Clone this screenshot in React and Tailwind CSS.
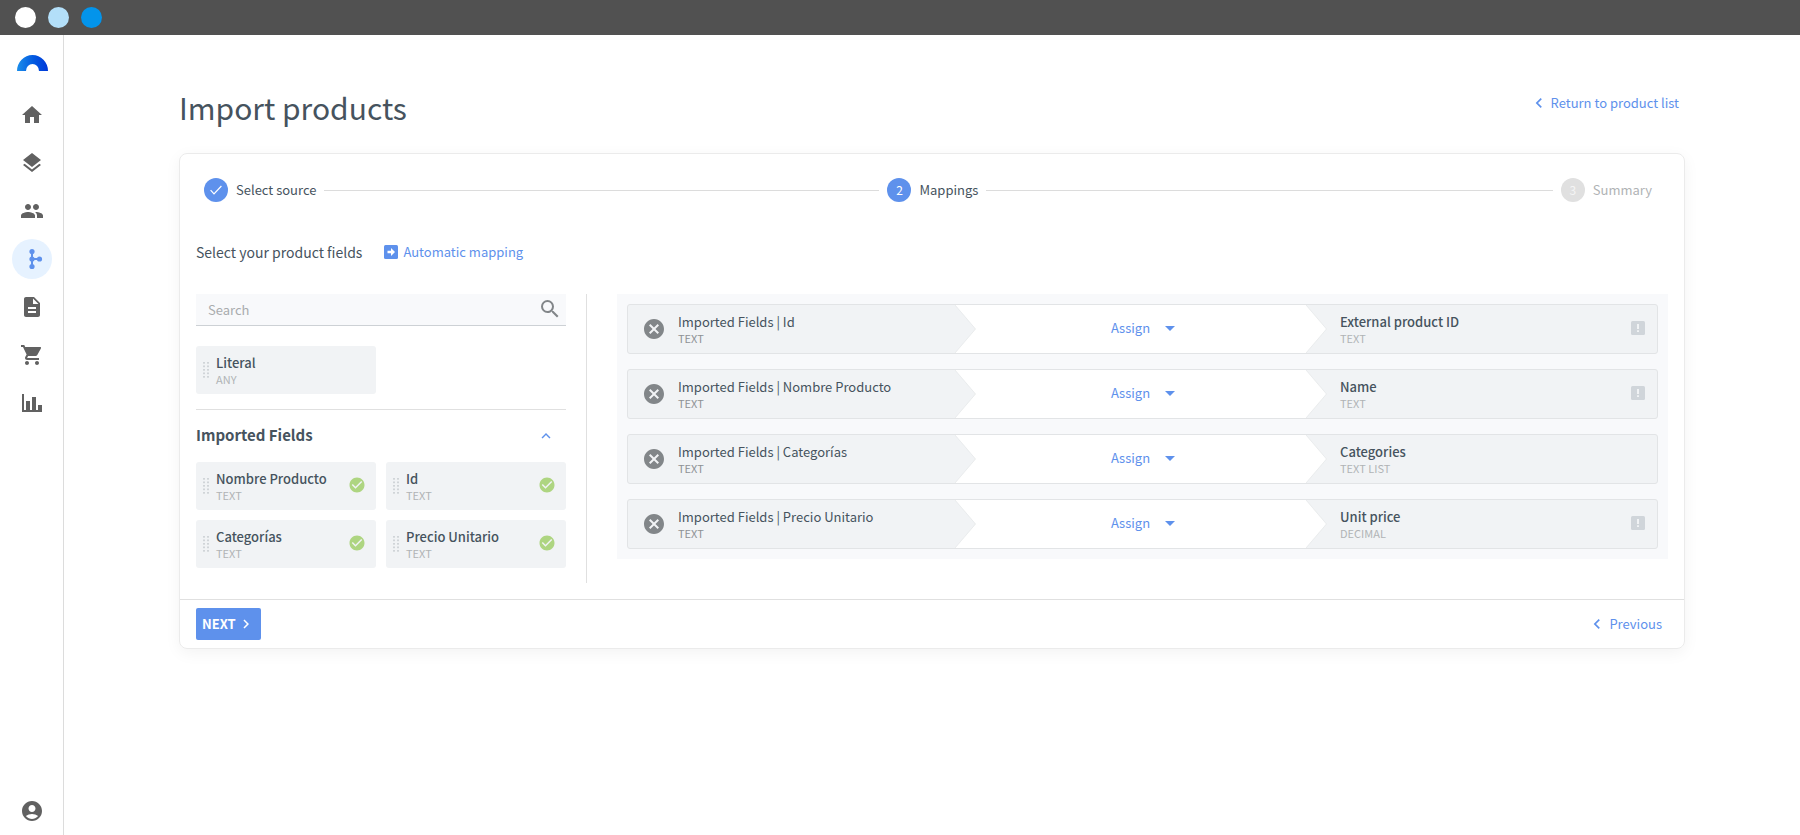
import React from "react";
import {
  MdHome,
  MdLayers,
  MdPeople,
  MdDescription,
  MdShoppingCart,
  MdAccountCircle,
  MdSearch,
  MdCheckCircle,
  MdCancel,
  MdChevronLeft,
  MdChevronRight,
  MdExpandLess,
  MdArrowDropDown,
} from "react-icons/md";

const importedFields = [
  { name: "Nombre Producto", type: "TEXT" },
  { name: "Id", type: "TEXT" },
  { name: "Categorías", type: "TEXT" },
  { name: "Precio Unitario", type: "TEXT" },
];

const mappings = [
  { source: "Id", target: "External product ID", type: "TEXT", required: true },
  { source: "Nombre Producto", target: "Name", type: "TEXT", required: true },
  { source: "Categorías", target: "Categories", type: "TEXT LIST", required: false },
  { source: "Precio Unitario", target: "Unit price", type: "DECIMAL", required: true },
];

function Logo() {
  return (
    <svg width="32" height="16" viewBox="0 0 32 16" aria-hidden="true">
      <defs>
        <linearGradient id="arc" x1="0" x2="1" y1="0" y2="0">
          <stop offset="0" stopColor="#1b8eea" />
          <stop offset="0.55" stopColor="#0258e0" />
          <stop offset="1" stopColor="#0038d8" />
        </linearGradient>
      </defs>
      <path d="M1 16a15.500 16 0 0 1 31 0h-9a6.500 7 0 0 0-13 0z" fill="url(#arc)" />
    </svg>
  );
}

function BranchIcon() {
  return (
    <svg width="24" height="24" viewBox="0 0 24 24" fill="currentColor" aria-hidden="true">
      <circle cx="12" cy="4.500" r="2.600" />
      <circle cx="12" cy="12" r="2.600" />
      <circle cx="12" cy="19.500" r="2.600" />
      <circle cx="19.500" cy="12" r="2.600" />
      <path d="M11 4.500h2v15h-2z M12 11h7.500v2H12z" />
    </svg>
  );
}

function ChartIcon() {
  return (
    <svg width="24" height="24" viewBox="0 0 24 24" fill="currentColor" aria-hidden="true">
      <path d="M2 3h2v16h2V10h4v9h2V6h4v13h2v-5h4v7H2z" />
    </svg>
  );
}

function ArrowBox() {
  return (
    <svg width="14" height="14" viewBox="0 0 14 14" aria-hidden="true">
      <rect width="14" height="14" rx="1.500" fill="currentColor" />
      <path d="M3.500 5.800h3.500V3L11 7 7 11V8.200H3.500z" fill="#fff" />
    </svg>
  );
}

function WarnBox() {
  return (
    <svg className="mb-0.5 text-[#d0d5da]" width="14" height="14" viewBox="0 0 14 14" role="img" aria-label="Required">
      <rect width="14" height="14" rx="1.500" fill="currentColor" />
      <path d="M6 3h2v5H6z M6 9.200h2v1.800H6z" fill="#f1f3f5" />
    </svg>
  );
}

function DragHandle() {
  return (
    <svg width="6" height="16" viewBox="0 0 6 16" fill="#d0d4d8" aria-hidden="true">
      {[0, 3.5, 7, 10.5, 14].map((y) => (
        <g key={y}>
          <rect x="0" y={y} width="2" height="1.700" />
          <rect x="4" y={y} width="2" height="1.700" />
        </g>
      ))}
    </svg>
  );
}

function NavItem({ label, active, children }) {
  return (
    <a
      href="#"
      aria-label={label}
      className={
        "flex size-10 items-center justify-center rounded-full " +
        (active ? "bg-[#e6f2ff] text-[#5e91ec]" : "text-[#616161]")
      }
    >
      {children}
    </a>
  );
}

function FieldChip({ name, type, mapped }) {
  return (
    <div className="flex h-12 items-center rounded-[3px] bg-[#f1f3f5] pr-2.5 pl-[7px]">
      <DragHandle />
      <div className="ml-[7px] flex-1 pt-0.5 whitespace-nowrap">
        <div className="text-[13px] leading-4 font-medium">{name}</div>
        <div className="text-[11px] leading-4 text-[#b0b3b5]">{type}</div>
      </div>
      {mapped && <MdCheckCircle size={18} className="mb-0.5 text-[#aed581]" aria-label="Mapped" />}
    </div>
  );
}

function Arrow({ fill }) {
  return (
    <svg
      className="absolute top-0 left-0 h-full w-[21px]"
      viewBox="0 0 21 48"
      preserveAspectRatio="none"
      aria-hidden="true"
    >
      <path d="M0 0L20.500 24 0 48z" fill={fill} />
      <path d="M0 0L20.500 24 0 48" fill="none" stroke="#e6e8ea" strokeWidth="0.800" />
    </svg>
  );
}

function MappingRow({ source, target, type, required }) {
  return (
    <li className="grid h-[50px] grid-cols-[327fr_351fr_351fr] overflow-hidden rounded-[3px] border border-[#e2e4e6] bg-[#f1f3f5]">
      <div className="flex items-center pl-3.5">
        <button type="button" aria-label={"Remove " + source} className="text-[#828689]">
          <MdCancel size={24} />
        </button>
        <div className="ml-3 pt-0.5">
          <div className="text-[13px] leading-4">Imported Fields | {source}</div>
          <div className="text-[11px] leading-4 text-[#8e9295]">TEXT</div>
        </div>
      </div>
      <div className="relative flex items-center justify-center bg-white pb-0.5 pl-8">
        <Arrow fill="#f1f3f5" />
        <button type="button" className="flex items-center gap-2 text-[13px] leading-4 text-[#5e91ec]">
          Assign
          <MdArrowDropDown size={24} />
        </button>
      </div>
      <div className="relative flex items-center justify-between pr-3 pl-[34px]">
        <Arrow fill="#ffffff" />
        <div className="pt-0.5">
          <div className="text-[13px] leading-4 font-medium">{target}</div>
          <div className="text-[11px] leading-4 text-[#b0b3b5]">{type}</div>
        </div>
        {required && <WarnBox />}
      </div>
    </li>
  );
}

function Step({ badge, label, disabled }) {
  return (
    <li className={"flex items-center gap-2 " + (disabled ? "text-[#b0b3b5]" : "")}>
      <span
        className={
          "flex size-6 items-center justify-center rounded-full text-[12px] leading-4 " +
          (disabled ? "bg-[#e0e0e0] text-[#f5f5f5]" : "bg-[#5e91ec] text-white")
        }
      >
        {badge}
      </span>
      <span className="text-[13px] leading-4">{label}</span>
    </li>
  );
}

export default function App() {
  return (
    <div className="flex min-h-screen flex-col bg-white font-['Noto_Sans_CJK_SC',sans-serif] text-[#46535e]">
      <div className="flex h-[35px] items-center gap-3 bg-[#515151] pb-px pl-[15px]">
        <span className="size-[21px] rounded-full bg-white" />
        <span className="size-[21px] rounded-full bg-[#b3dff9]" />
        <span className="size-[21px] rounded-full bg-[#0394eb]" />
      </div>

      <div className="flex flex-1">
        <nav className="flex w-16 flex-col items-center gap-2 border-r border-[#dcdcdc] pt-5 pb-1">
          <a href="#" aria-label="Start" className="mb-4">
            <Logo />
          </a>
          <NavItem label="Home"><MdHome size={24} /></NavItem>
          <NavItem label="Catalogue"><MdLayers size={24} /></NavItem>
          <NavItem label="Customers"><MdPeople size={24} /></NavItem>
          <NavItem label="Integrations" active><BranchIcon /></NavItem>
          <NavItem label="Documents"><MdDescription size={24} /></NavItem>
          <NavItem label="Orders"><MdShoppingCart size={24} /></NavItem>
          <NavItem label="Reports"><ChartIcon /></NavItem>
          <div className="mt-auto">
            <NavItem label="Account"><MdAccountCircle size={24} /></NavItem>
          </div>
        </nav>

        <main className="min-w-0 flex-1 px-[115px] pt-[50px]">
          <header className="flex items-start justify-between">
            <h1 className="text-[30px] leading-[44px]">Import products</h1>
            <a href="#" className="mt-2 mr-1.5 flex items-center gap-0.5 text-[13px] leading-4 text-[#5e91ec]">
              <MdChevronLeft size={20} />
              Return to product list
            </a>
          </header>

          <section className="mt-6 rounded-lg border border-[#ebebeb] shadow-[0_4px_16px_rgba(0,0,0,0.05)]">
            <ol className="flex items-center gap-2 px-6 pt-6 pr-8">
              <Step
                badge={
                  <svg width="12" height="10" viewBox="0 0 12 10" fill="none" role="img" aria-label="Done">
                    <path d="M0.600 5.200L4 8.800 11.400 1" stroke="#fff" strokeWidth="1.200" />
                  </svg>
                }
                label="Select source"
              />
              <li aria-hidden="true" className="h-px flex-[49] bg-[#dcdcdc]" />
              <Step badge="2" label="Mappings" />
              <li aria-hidden="true" className="h-px flex-[50] bg-[#dcdcdc]" />
              <Step badge="3" label="Summary" disabled />
            </ol>

            <div className="mt-10 flex items-center gap-[22px] px-4">
              <h2 className="text-[14px] leading-5">Select your product fields</h2>
              <button type="button" className="flex items-center gap-[5px] text-[13px] leading-4 text-[#5e91ec]">
                <ArrowBox />
                Automatic mapping
              </button>
            </div>

            <div className="flex items-start px-4 pt-8 pb-4">
              <aside className="w-[391px] shrink-0 border-r border-[#e0e0e0] pr-5 pb-[15px]">
                <label className="flex h-8 items-center border-b border-[#cdd1d5] bg-[#f8f9fb] pr-1 pl-3">
                  <input
                    type="text"
                    placeholder="Search"
                    aria-label="Search"
                    className="h-6 min-w-0 flex-1 bg-transparent text-[13px] leading-6 outline-none placeholder:text-[#a9acae]"
                  />
                  <MdSearch size={24} className="mb-0.5 text-[#828689]" />
                </label>
                <div className="mt-5 grid grid-cols-2 gap-2.5 border-b border-[#e0e0e0] pb-[15px]">
                  <FieldChip name="Literal" type="ANY" />
                </div>
                <div className="mt-[15px] flex items-end justify-between pr-[11px]">
                  <h3 className="text-[15px] leading-5 font-bold">Imported Fields</h3>
                  <button type="button" aria-label="Collapse" className="text-[#5e91ec]">
                    <MdExpandLess size={18} />
                  </button>
                </div>
                <div className="mt-[17px] grid grid-cols-2 gap-2.5">
                  {importedFields.map((f) => (
                    <FieldChip key={f.name} name={f.name} type={f.type} mapped />
                  ))}
                </div>
              </aside>

              <ul className="ml-[30px] flex min-w-0 flex-1 flex-col gap-[15px] bg-[#f8f9fb] p-2.5">
                {mappings.map((m) => (
                  <MappingRow key={m.target} {...m} />
                ))}
              </ul>
            </div>

            <footer className="flex items-center justify-between border-t border-[#e0e0e0] px-4 py-2">
              <button
                type="button"
                className="flex h-8 items-center gap-px rounded-xs bg-[#5e91ec] px-1.5 text-[13px] leading-4 font-bold text-white"
              >
                NEXT
                <MdChevronRight size={18} />
              </button>
              <button type="button" className="mr-1.5 flex items-center gap-0.5 text-[13px] leading-4 text-[#5e91ec]">
                <MdChevronLeft size={20} />
                Previous
              </button>
            </footer>
          </section>
        </main>
      </div>
    </div>
  );
}
